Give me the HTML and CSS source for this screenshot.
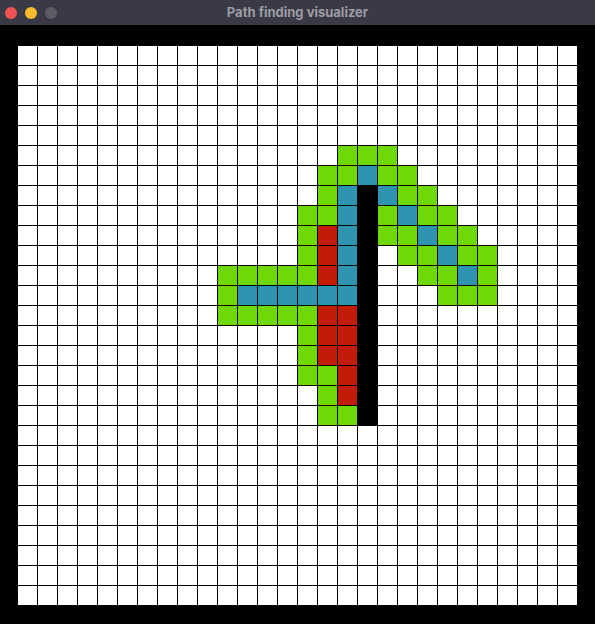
FILE: index.html
```html
<!DOCTYPE html>
<html lang="en">
<head>
<meta charset="utf-8">
<title>Path finding visualizer</title>
<link rel="stylesheet" href="styles.css">
</head>
<body>
<div class="window">
  <header class="titlebar">
    <div class="lights">
      <span class="light close"></span>
      <span class="light min"></span>
      <span class="light zoom"></span>
    </div>
    <div class="title">Path finding visualizer</div>
    <div></div>
  </header>
  <main class="stage">
    <div class="grid" id="grid"></div>
  </main>
</div>
<script src="script.js"></script>
</body>
</html>
```

FILE: styles.css
```css
html, body {
  margin: 0;
  padding: 0;
  background: #000;
}
.window {
  width: 595px;
  height: 624px;
  background: #000;
  display: flex;
  flex-direction: column;
  overflow: hidden;
}
.titlebar {
  height: 25px;
  flex: none;
  background: #3a3a46;
  display: grid;
  grid-template-columns: 1fr auto 1fr;
  align-items: center;
}
.lights {
  display: flex;
  gap: 8px;
  padding-left: 5px;
}
.light {
  width: 12px;
  height: 12px;
  border-radius: 50%;
  display: block;
}
.close { background: #f05252; }
.min { background: #f8bb2d; }
.zoom { background: #5b5c66; }
.title {
  font-family: Inter, "Open Sans", "Liberation Sans", sans-serif;
  font-weight: 700;
  font-size: 13px;
  color: #9c9ca4;
  line-height: 1;
}
.stage {
  padding: 20px 0 0 17px;
}
.grid {
  display: grid;
  grid-template-columns: repeat(28, 19px);
  grid-auto-rows: 19px;
  gap: 1px;
  padding: 1px;
  background: #000;
  width: max-content;
}
.cell { background: #fff; }
.cell.g { background: #6fd905; }
.cell.b { background: #2d95b0; }
.cell.r { background: #c41a08; }
.cell.k { background: #000; }
```

FILE: script.js
```js
(function () {
  var N = 28;
  var data = [
    [5, 16, "ggg"],
    [6, 15, "ggbgg"],
    [7, 15, "gbkbgg"],
    [8, 14, "ggbkgbgg"],
    [9, 14, "grbkggbgg"],
    [10, 14, "grbk.ggbgg"],
    [11, 10, "gggggrbk..ggbg"],
    [12, 10, "gbbbbbbk...ggg"],
    [13, 10, "gggggrrk"],
    [14, 14, "grrk"],
    [15, 14, "grrk"],
    [16, 14, "ggrk"],
    [17, 15, "grk"],
    [18, 15, "ggk"]
  ];
  var map = [];
  for (var r = 0; r < N; r++) {
    map.push(new Array(N).fill("."));
  }
  data.forEach(function (d) {
    for (var i = 0; i < d[2].length; i++) {
      map[d[0]][d[1] + i] = d[2][i];
    }
  });
  var grid = document.getElementById("grid");
  var frag = document.createDocumentFragment();
  for (var y = 0; y < N; y++) {
    for (var x = 0; x < N; x++) {
      var c = document.createElement("div");
      c.className = "cell" + (map[y][x] !== "." ? " " + map[y][x] : "");
      frag.appendChild(c);
    }
  }
  grid.appendChild(frag);
})();
```
